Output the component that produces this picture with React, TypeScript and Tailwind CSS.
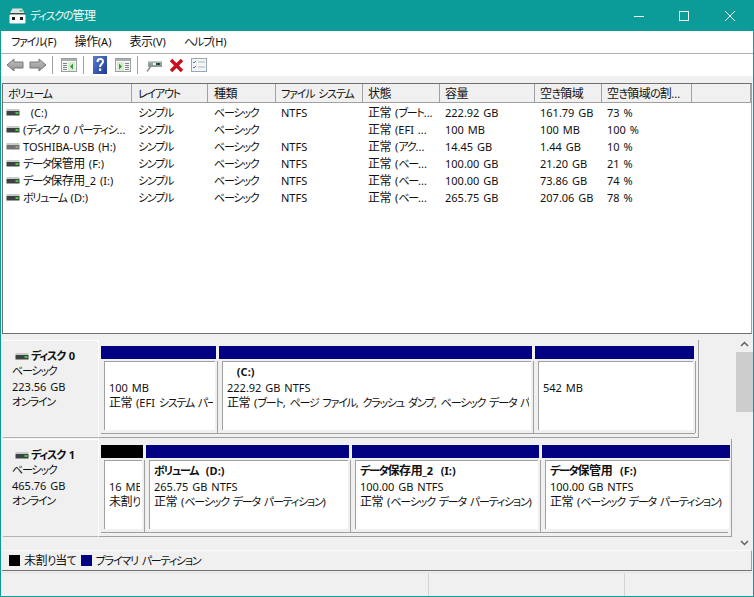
import React from 'react';

const columns = [
  { label: 'ボリューム', w: 'w-[129px]', pl: 'pl-[5px]' },
  { label: 'レイアウト', w: 'w-[76px]', pl: 'pl-[6px]' },
  { label: '種類', w: 'w-[68px]', pl: 'pl-[6px]' },
  { label: 'ファイル システム', w: 'w-[87px]', pl: 'pl-[5px]' },
  { label: '状態', w: 'w-[77px]', pl: 'pl-[5px]' },
  { label: '容量', w: 'w-[95px]', pl: 'pl-[5px]' },
  { label: '空き領域', w: 'w-[67px]', pl: 'pl-[5px]' },
  { label: '空き領域の割...', w: 'w-[90px]', pl: 'pl-[5px]' },
  { label: '', w: 'w-[59px]', pl: 'pl-[5px]' },
];

const rows = [
  ['  (C:)', 'シンプル', 'ベーシック', 'NTFS', '正常 (ブート...', '222.92 GB', '161.79 GB', '73 %'],
  ['(ディスク 0 パーティシ...', 'シンプル', 'ベーシック', '', '正常 (EFI ...', '100 MB', '100 MB', '100 %'],
  ['TOSHIBA-USB (H:)', 'シンプル', 'ベーシック', 'NTFS', '正常 (アク...', '14.45 GB', '1.44 GB', '10 %'],
  ['データ保管用 (F:)', 'シンプル', 'ベーシック', 'NTFS', '正常 (ベー...', '100.00 GB', '21.20 GB', '21 %'],
  ['データ保存用_2 (I:)', 'シンプル', 'ベーシック', 'NTFS', '正常 (ベー...', '100.00 GB', '73.86 GB', '74 %'],
  ['ボリューム (D:)', 'シンプル', 'ベーシック', 'NTFS', '正常 (ベー...', '265.75 GB', '207.06 GB', '78 %'],
];

// the original font has much narrower kana and digits than Noto, so squeeze per run
function T({ children }: { children: string }) {
  const runs = children.split(/([\u3040-\u30ff]+|[\u4e00-\u9fff]+)/).filter(Boolean);
  return (
    <>
      {runs.map((run, i) =>
        /[\u3040-\u30ff]/.test(run) ? (
          <span key={i} className="text-[11px] tracking-[-1.2px]">{run}</span>
        ) : /[\u4e00-\u9fff]/.test(run) ? (
          <span key={i} className="tracking-[-0.4px]">{run}</span>
        ) : (
          <span key={i} className="text-[11px] [word-spacing:1px]">{run}</span>
        )
      )}
    </>
  );
}

function DriveIcon({ gray }: { gray?: boolean }) {
  return (
    <svg width="14" height="7" viewBox="0 0 14 7" className="shrink-0">
      <rect x="0.5" y="0" width="13" height="2" fill="#c8ccc8" />
      <rect x="0.5" y="2" width="13" height="4.5" fill={gray ? '#707070' : '#3c4240'} />
      <rect x="9.5" y="3" width="3" height="2" fill={gray ? '#9a9a9a' : '#46c846'} />
    </svg>
  );
}

function TitleIcon() {
  return (
    <svg width="17" height="16" viewBox="0 0 17 16">
      <path d="M3.5 0.5h9.5l2.5 4.5H1z" fill="#e2e4e4" />
      <rect x="10.5" y="2" width="3" height="1.5" fill="#3ec46a" />
      <rect x="1" y="5" width="15" height="1.5" fill="#3d4848" />
      <rect x="0.5" y="6.5" width="16" height="9" rx="1" fill="#fafafa" />
      <rect x="3" y="9" width="3" height="3" fill="#1c1c1c" />
      <rect x="11" y="9" width="3" height="3" fill="#1c1c1c" />
    </svg>
  );
}

function PaneIcon({ flip }: { flip?: boolean }) {
  return (
    <svg width="16" height="16" viewBox="0 0 16 16">
      <rect x="0.5" y="1.5" width="15" height="13" fill="#f6f6f6" stroke="#9aa0a0" />
      <rect x="1" y="2" width="14" height="2" fill="#a8b0b0" />
      {flip ? (
        <>
          <rect x="2" y="5" width="7" height="9" fill="#dcecd4" />
          <path d="M4 6.5l3 3-3 3z" fill="#2f9a3c" />
          <path d="M10 6.5h4M10 8.5h4M10 10.5h4M10 12.5h4" stroke="#7c8484" />
        </>
      ) : (
        <>
          <path d="M2 6.5h4M2 8.5h4M2 10.5h4M2 12.5h4" stroke="#7c8484" />
          <rect x="7" y="5" width="7" height="9" fill="#dcecd4" />
          <path d="M12 6.5l-3 3 3 3z" fill="#2f9a3c" />
        </>
      )}
    </svg>
  );
}

function Toolbar() {
  return (
    <div className="flex h-[22px] items-center bg-white pl-[5px]">
      <svg width="18" height="14" viewBox="0 0 18 14">
        <defs>
          <linearGradient id="arrowGray" x1="0" y1="0" x2="0" y2="1">
            <stop offset="0" stopColor="#c4c4c4" />
            <stop offset="1" stopColor="#8e8e8e" />
          </linearGradient>
        </defs>
        <path d="M8 1L1 7l7 6v-3h9V4H8z" fill="url(#arrowGray)" stroke="#767676" />
      </svg>
      <svg width="18" height="14" viewBox="0 0 18 14" className="ml-[5px]">
        <path d="M10 1l7 6-7 6v-3H1V4h9z" fill="url(#arrowGray)" stroke="#767676" />
      </svg>
      <div className="ml-[5px] h-[18px] w-px bg-[#a0a0a0]" />
      <div className="ml-2 flex"><PaneIcon /></div>
      <div className="ml-[6px] h-[18px] w-px bg-[#a0a0a0]" />
      <svg width="14" height="18" viewBox="0 0 14 18" className="ml-[9px]">
        <defs>
          <linearGradient id="helpBlue" x1="0" y1="0" x2="1" y2="1">
            <stop offset="0" stopColor="#5a7fd0" />
            <stop offset="1" stopColor="#1c3a94" />
          </linearGradient>
        </defs>
        <rect width="14" height="18" fill="url(#helpBlue)" />
        <path d="M4.5 6c0-4 5.5-4 5.5-.5 0 2.5-3 2.5-3 5.5" fill="none" stroke="#fff" strokeWidth="2" />
        <rect x="6" y="12.5" width="2.2" height="2.4" fill="#fff" />
      </svg>
      <div className="ml-2 flex"><PaneIcon flip /></div>
      <div className="ml-[6px] h-[18px] w-px bg-[#a0a0a0]" />
      <svg width="16" height="16" viewBox="0 0 16 16" className="ml-[8px]">
        <rect x="2" y="4" width="14" height="6" fill="#929c9a" />
        <rect x="2" y="4" width="14" height="1.5" fill="#c4cbc8" />
        <rect x="7" y="6" width="3" height="2" fill="#eef4ee" />
        <rect x="10" y="6" width="4" height="2" fill="#14502a" />
        <path d="M5 9l-4 5.5" stroke="#8c8c8c" strokeWidth="1.4" />
      </svg>
      <svg width="15" height="15" viewBox="0 0 15 15" className="ml-[7px]">
        <path d="M2 2l11 11M13 2L2 13" stroke="#c8101c" strokeWidth="3.4" />
      </svg>
      <svg width="16" height="14" viewBox="0 0 16 14" className="ml-[7px]">
        <rect x="0.5" y="0.5" width="15" height="13" fill="#f2f4f6" stroke="#9aa8b4" />
        <path d="M2 4l1 1 2-2M2 9l1 1 2-2" stroke="#4a78b8" fill="none" />
        <path d="M7 4h7M7 9h7" stroke="#b0b8c0" />
      </svg>
    </div>
  );
}

type Part = { w: string; black?: boolean; name?: string; size?: string; status?: string; indent?: boolean };

function Partition({ p }: { p: Part }) {
  return (
    <div className={`${p.w} flex shrink-0 flex-col`}>
      <div className={`h-[13px] ${p.black ? 'bg-black' : 'bg-[#000080]'}`} />
      <div className="-mr-[2px] mt-[2px] flex-1 border-r border-[#a0a0a0] pb-[3px] pl-[3px] pr-[2px]">
        <div className="h-full border-l border-t border-[#a0a0a0] bg-white pl-1 pr-[2px] pt-[2px] leading-[15.5px]">
          <div className="overflow-hidden whitespace-pre">
            <div className={`h-[15.5px] font-bold ${p.indent ? 'pl-[6px]' : ''}`}>{p.name ? <T>{p.name}</T> : null}</div>
            <div className="h-[15.5px]"><T>{p.size ?? ''}</T></div>
            <div className="h-[15.5px]"><T>{p.status ?? ''}</T></div>
          </div>
        </div>
      </div>
    </div>
  );
}

function DiskRow({ name, size, parts, w, rowClass }: { name: string; size: string; parts: Part[]; w: string; rowClass: string }) {
  return (
    <div className={`flex ${rowClass}`}>
      <div className="w-[96px] shrink-0 border-b border-r border-t border-b-[#b4b4b4] border-r-white border-t-white bg-[#f0f0f0] pl-[9px] pt-[8px] leading-[15.5px]">
        <div className="flex h-[14px] items-center gap-[2px] pl-[3px] font-bold">
          <DriveIcon />
          <span><T>{name}</T></span>
        </div>
        <div><T>ベーシック</T></div>
        <div><T>{size}</T></div>
        <div><T>オンライン</T></div>
      </div>
      <div className={`${w} h-[98px] border-b border-r border-[#a0a0a0] pb-[3px] pl-[2px] pr-[3px] pt-[6px]`}>
        <div className="flex h-full gap-[3px] border-b border-[#a0a0a0]">
          {parts.map((p, i) => (
            <Partition key={i} p={p} />
          ))}
        </div>
      </div>
    </div>
  );
}

export default function App() {
  return (
    <div className="flex h-[597px] w-[754px] flex-col overflow-hidden border-x border-b border-[#0b9b98] bg-[#f0f0f0] font-['Noto_Sans','Noto_Sans_CJK_JP',sans-serif] text-[12px] text-[#111] [font-feature-settings:'palt']">
      {/* title bar */}
      <div className="-mx-px flex h-[31px] shrink-0 items-center bg-[#0b9b98] pl-[9px] text-[#f2fbfb]">
        <TitleIcon />
        <span className="ml-[4px] whitespace-nowrap"><T>ディスクの管理</T></span>
        <div className="ml-auto flex items-center pr-[19px]">
          <svg width="10" height="10" viewBox="0 0 10 10"><path d="M0 5.5h10" stroke="#f2fbfb" /></svg>
          <svg width="10" height="10" viewBox="0 0 10 10" className="ml-[35px]"><rect x="0.5" y="0.5" width="9" height="9" fill="none" stroke="#f2fbfb" /></svg>
          <svg width="10" height="10" viewBox="0 0 10 10" className="ml-[36px]"><path d="M0 0l10 10M10 0L0 10" stroke="#f2fbfb" /></svg>
        </div>
      </div>

      {/* menu */}
      <div className="flex h-[22px] shrink-0 items-center gap-[18px] bg-white pl-[10px]">
        <span><T>ファイル(F)</T></span>
        <span><T>操作(A)</T></span>
        <span><T>表示(V)</T></span>
        <span><T>ヘルプ(H)</T></span>
      </div>
      <div className="h-px shrink-0 bg-[#a9b0b0]" />
      <Toolbar />
      <div className="h-[7px] shrink-0 bg-[#f0f0f0]" />

      {/* volume list */}
      <div className="mx-px h-[251px] shrink-0 border border-[#707070] border-r-[#a0a0a0] bg-white">
        <div className="mb-px flex h-[19px] border-b border-[#a0a0a0] bg-[#f0f0f0]">
          {columns.map((c, i) => (
            <div key={i} className={`${c.w} ${c.pl} shrink-0 whitespace-pre border-r border-[#a0a0a0] leading-[19px]`}><T>{c.label}</T></div>
          ))}
        </div>
        {rows.map((r, i) => (
          <div key={i} className="flex h-[17px] items-center whitespace-pre leading-[17px]">
            <div className="flex w-[129px] shrink-0 items-center gap-[3px] overflow-hidden pl-[3px]">
              <DriveIcon gray={i === 2} />
              <span><T>{r[0]}</T></span>
            </div>
            <div className="w-[76px] shrink-0 pl-[6px]"><T>{r[1]}</T></div>
            <div className="w-[68px] shrink-0 pl-[6px]"><T>{r[2]}</T></div>
            <div className="w-[87px] shrink-0 pl-[5px]"><T>{r[3]}</T></div>
            <div className="w-[77px] shrink-0 pl-[5px]"><T>{r[4]}</T></div>
            <div className="w-[95px] shrink-0 pl-[5px]"><T>{r[5]}</T></div>
            <div className="w-[67px] shrink-0 pl-[5px]"><T>{r[6]}</T></div>
            <div className="w-[90px] shrink-0 pl-[5px]"><T>{r[7]}</T></div>
          </div>
        ))}
      </div>

      {/* disk pane */}
      <div className="mx-px flex h-[216px] shrink-0 bg-[#f0f0f0] pl-[1px]">
        <div className="w-[733px] shrink-0 pt-[6px]">
          <DiskRow
            name="ディスク 0"
            size="223.56 GB"
            w="w-[600px]"
            rowClass="h-[98px]"
            parts={[
              { w: 'w-[115px]', size: '100 MB', status: '正常 (EFI システム パーティション)' },
              { w: 'w-[313px]', name: ' (C:)', indent: true, size: '222.92 GB NTFS', status: '正常 (ブート, ページ ファイル, クラッシュ ダンプ, ベーシック データ パーティション)' },
              { w: 'w-[159px]', size: '542 MB', status: '' },
            ]}
          />
          <DiskRow
            name="ディスク 1"
            size="465.76 GB"
            w="w-[633px]"
            rowClass="h-[98px] mt-[1px]"
            parts={[
              { w: 'w-[42px]', black: true, size: '16 MB', status: '未割り当て' },
              { w: 'w-[203px]', name: 'ボリューム  (D:)', size: '265.75 GB NTFS', status: '正常 (ベーシック データ パーティション)' },
              { w: 'w-[187px]', name: 'データ保存用_2  (I:)', size: '100.00 GB NTFS', status: '正常 (ベーシック データ パーティション)' },
              { w: 'w-[188px]', name: 'データ保管用  (F:)', size: '100.00 GB NTFS', status: '正常 (ベーシック データ パーティション)' },
            ]}
          />
        </div>
        <div className="flex w-[17px] shrink-0 flex-col items-center justify-between pb-[4px] pt-[7px]">
          <svg width="9" height="6" viewBox="0 0 9 6"><path d="M1 5l3.5-3.5L8 5" fill="none" stroke="#606060" strokeWidth="1.5" /></svg>
          <div className="mb-auto mt-[5px] h-[60px] w-full bg-[#cdcdcd]" />
          <svg width="9" height="6" viewBox="0 0 9 6"><path d="M1 1l3.5 3.5L8 1" fill="none" stroke="#606060" strokeWidth="1.5" /></svg>
        </div>
      </div>

      {/* legend */}
      <div className="mx-px flex h-[21px] shrink-0 items-center border-y border-r border-b-[#707070] border-r-[#a0a0a0] border-t-[#fafafa] pl-[7px]">
        <div className="h-[11px] w-[11px] bg-black" />
        <span className="ml-[4px]"><T>未割り当て</T></span>
        <div className="ml-[5px] h-[11px] w-[11px] bg-[#000080]" />
        <span className="ml-[4px] whitespace-pre"><T>プライマリ パーティション</T></span>
      </div>

      {/* status bar */}
      <div className="mt-px flex flex-1 border-t border-[#e4e4e4]">
        <div className="w-[428px] border-r border-[#d4d4d4]" />
        <div className="w-[196px] border-r border-[#d4d4d4]" />
      </div>
    </div>
  );
}
